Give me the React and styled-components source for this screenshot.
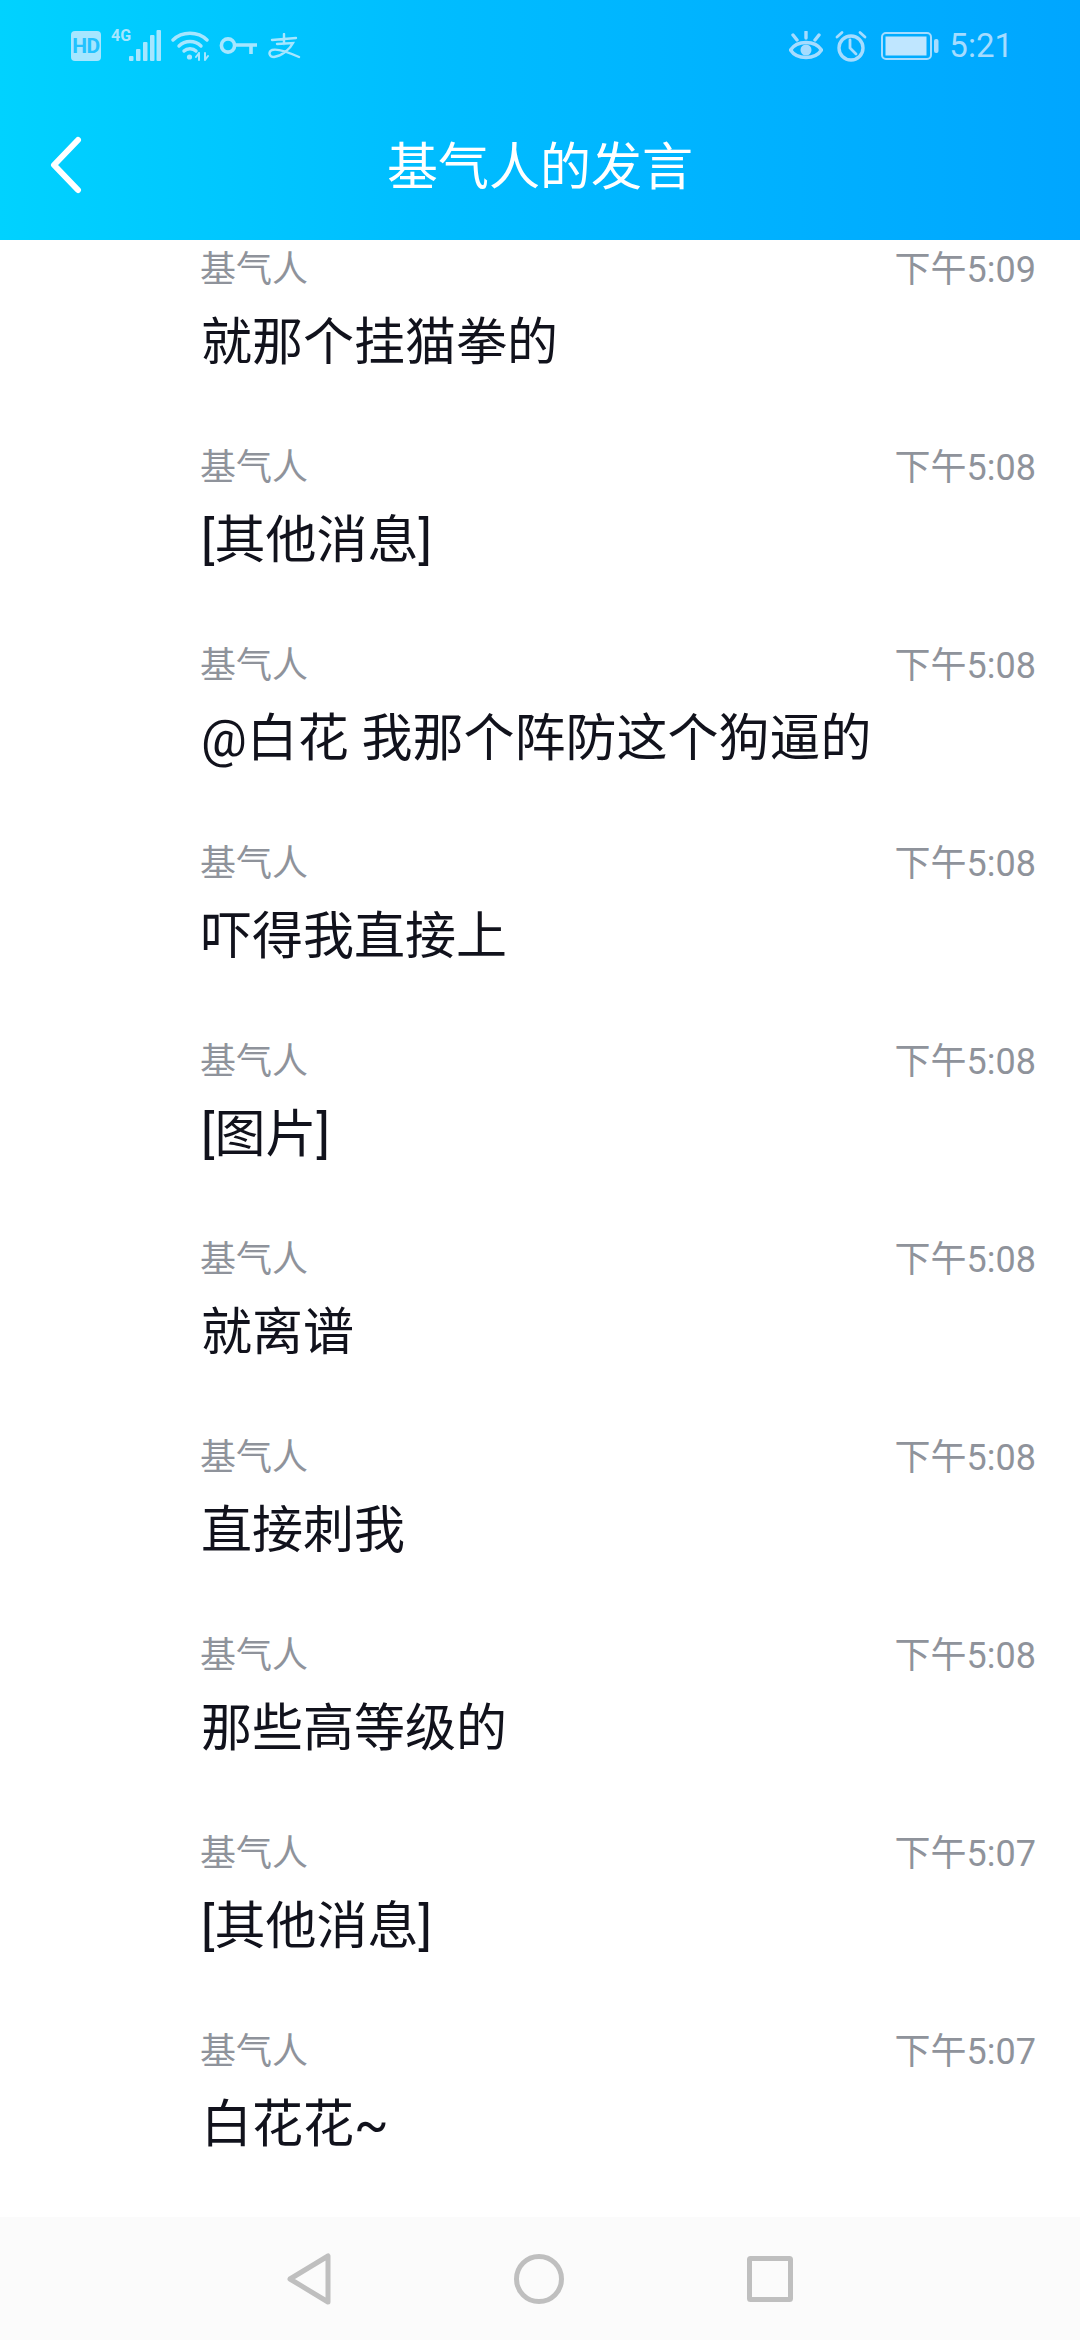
import React from 'react';
import styled, { createGlobalStyle } from 'styled-components';

const GlobalStyle = createGlobalStyle`
  html, body {
    margin: 0;
    padding: 0;
    background: #fff;
  }
  * {
    box-sizing: border-box;
  }
`;

const Page = styled.div`
  width: 1080px;
  height: 2340px;
  display: flex;
  flex-direction: column;
  overflow: hidden;
  background: #fff;
  font-family: Roboto, "Noto Sans CJK SC", sans-serif;
`;

const Header = styled.header`
  height: 240px;
  flex-shrink: 0;
  background: linear-gradient(90deg, #00d2ff 0%, #00bdff 40%, #00a6ff 100%);
  display: flex;
  flex-direction: column;
`;

const StatusBar = styled.div`
  height: 92px;
  padding: 0 67px 0 71px;
  display: flex;
  align-items: center;
  justify-content: space-between;
`;

const StatusGroup = styled.div`
  display: flex;
  align-items: center;
  gap: ${(p) => p.$gap || 10}px;
`;

const HdBadge = styled.span`
  width: 30px;
  height: 30px;
  border-radius: 4px;
  background: #a6e6ff;
  color: #22c2ff;
  font-size: 21px;
  font-weight: 700;
  letter-spacing: -0.5px;
  display: flex;
  align-items: center;
  justify-content: center;
`;

const SignalWrap = styled.div`
  width: 50px;
  height: 32px;
  display: flex;
  align-items: flex-end;
  justify-content: flex-end;
  position: relative;
`;

const NetLabel = styled.span`
  position: absolute;
  left: 0;
  top: -3px;
  font-size: 16px;
  line-height: 18px;
  font-weight: 700;
  color: #a6e6ff;
`;

const BatteryWrap = styled.span`
  display: flex;
  margin: 0 -2px 0 2px;
`;

const StatusTime = styled.span`
  font-size: 33px;
  line-height: 40px;
  color: #a5dcff;
`;

const NavRow = styled.div`
  flex: 1;
  display: grid;
  grid-template-columns: 150px 1fr 150px;
  align-items: center;
  padding-top: 4px;
`;

const BackButton = styled.div`
  padding-left: 50px;
  padding-bottom: 6px;
  display: flex;
  align-items: center;
`;

const Title = styled.h1`
  margin: 0;
  text-align: center;
  color: #fff;
  font-size: 51px;
  line-height: 64px;
  font-weight: 400;
`;

const List = styled.main`
  flex: 1;
  overflow: hidden;
  padding-top: 4px;
`;

const Row = styled.div`
  height: 198px;
  padding: 0 44px 0 200px;
`;

const RowTop = styled.div`
  display: flex;
  justify-content: space-between;
  align-items: center;
  height: 44px;
  color: #8f939b;
`;

const Name = styled.span`
  font-size: 36px;
  font-weight: 400;
`;

const Time = styled.span`
  font-size: 36px;
  color: #8f939b;
`;

const Message = styled.div`
  margin-top: 19px;
  padding-left: 1px;
  font-size: 51px;
  line-height: 72px;
  font-weight: 400;
  color: #11121c;
`;

const BottomNav = styled.nav`
  height: 123px;
  flex-shrink: 0;
  background: #fbfbfb;
  display: flex;
  align-items: center;
  justify-content: center;
  gap: 183px;
`;

const messages = [
  { text: '就那个挂猫拳的', time: '下午5:09' },
  { text: '[其他消息]', time: '下午5:08' },
  { text: '@白花 我那个阵防这个狗逼的', time: '下午5:08' },
  { text: '吓得我直接上', time: '下午5:08' },
  { text: '[图片]', time: '下午5:08' },
  { text: '就离谱', time: '下午5:08' },
  { text: '直接刺我', time: '下午5:08' },
  { text: '那些高等级的', time: '下午5:08' },
  { text: '[其他消息]', time: '下午5:07' },
  { text: '白花花~', time: '下午5:07' },
];

const tint = '#a6e6ff';
const tintRight = '#a5dcff';

const Signal = () => (
  <svg width="32" height="32" viewBox="0 0 32 32" fill={tint}>
    <rect x="0" y="26" width="4.500" height="5" rx="1" />
    <rect x="7" y="19" width="4.500" height="12" rx="1" />
    <rect x="14" y="12" width="4.500" height="19" rx="1" />
    <rect x="21" y="5" width="4.500" height="26" rx="1" />
    <rect x="27.500" y="0" width="4.500" height="31" rx="1" />
  </svg>
);

const Wifi = () => (
  <svg width="38" height="30" viewBox="0 0 38 30" fill="none" stroke={tint} strokeWidth="3.4" strokeLinecap="round">
    <path d="M2 9 C11 0 27 0 36 9" />
    <path d="M8 15 C14 9 24 9 30 15" />
    <path d="M13 20 C16 17 22 17 25 20" />
    <circle cx="18.5" cy="26" r="2.6" fill={tint} stroke="none" />
    <path d="M28 22 L28 29 M28 22 L25 26 M34 22 L34 29 M34 29 L37 25" strokeWidth="2" />
  </svg>
);

const KeyIcon = () => (
  <svg width="39" height="20" viewBox="0 0 39 20" fill="none" stroke={tint} strokeWidth="3.6">
    <circle cx="9" cy="9.5" r="6.6" />
    <path d="M16 9 L38 9 M32 9 L32 18" />
  </svg>
);

const AlipayIcon = () => (
  <svg width="33" height="26" viewBox="0 0 33 26" fill="none" stroke={tint} strokeWidth="2.4" strokeLinecap="round">
    <path d="M4 7 L28 5 M16 1 L16 11 M9 11 L25 10 C22 16 14 23 6 24 C1 24 0 19 4 17 C10 15 22 20 31 24" />
  </svg>
);

const Eye = () => (
  <svg width="34" height="30" viewBox="0 0 34 30" fill="none" stroke={tintRight} strokeWidth="3.4" strokeLinecap="round">
    <path d="M1.5 19 C8 9 26 9 32.500 19 C26 29 8 29 1.500 19 Z" />
    <circle cx="17" cy="19" r="5.500" fill={tintRight} stroke="none" />
    <path d="M17 1 L17 7 M4 4 L8 9 M30 4 L26 9" />
  </svg>
);

const Alarm = () => (
  <svg width="32" height="32" viewBox="0 0 32 32" fill="none" stroke={tintRight} strokeWidth="3.400" strokeLinecap="round">
    <circle cx="16" cy="18" r="12" />
    <path d="M15 10 L15 18 L21 24 M2 7 L7 2.500 M30 7 L25 2.500" strokeWidth="2.800" />
  </svg>
);

const Battery = () => (
  <svg width="58" height="28" viewBox="0 0 58 28" fill="none">
    <rect x="1" y="1" width="49" height="26" rx="4" stroke={tintRight} strokeWidth="2" />
    <rect x="4.500" y="4.500" width="41" height="19" fill="#bfe6ff" />
    <rect x="53" y="7" width="4.500" height="14" rx="2" fill={tintRight} />
  </svg>
);

const Chevron = () => (
  <svg width="32" height="58" viewBox="0 0 32 58" fill="none" stroke="#fff" strokeWidth="6" strokeLinecap="round" strokeLinejoin="round">
    <path d="M28 4 L4 29 L28 54" />
  </svg>
);

const NavBack = () => (
  <svg width="44" height="52" viewBox="0 0 44 52" fill="none" stroke="#bfbfbf" strokeWidth="5" strokeLinejoin="round">
    <path d="M41 3 L41 49 L3 26 Z" />
  </svg>
);

const NavHome = () => (
  <svg width="50" height="50" viewBox="0 0 50 50" fill="none" stroke="#bfbfbf" strokeWidth="5">
    <circle cx="25" cy="25" r="22.500" />
  </svg>
);

const NavSquare = () => (
  <svg width="46" height="46" viewBox="0 0 46 46" fill="none" stroke="#bfbfbf" strokeWidth="5" strokeLinejoin="round">
    <rect x="2.500" y="2.500" width="41" height="41" rx="1" />
  </svg>
);

const App = () => {
  return (
    <Page>
      <GlobalStyle />
      <Header>
        <StatusBar>
          <StatusGroup>
            <HdBadge>HD</HdBadge>
            <SignalWrap>
              <NetLabel>4G</NetLabel>
              <Signal />
            </SignalWrap>
            <Wifi />
            <KeyIcon />
            <AlipayIcon />
          </StatusGroup>
          <StatusGroup $gap={12}>
            <Eye />
            <Alarm />
            <BatteryWrap>
              <Battery />
            </BatteryWrap>
            <StatusTime>5:21</StatusTime>
          </StatusGroup>
        </StatusBar>
        <NavRow>
          <BackButton>
            <Chevron />
          </BackButton>
          <Title>基气人的发言</Title>
        </NavRow>
      </Header>
      <List>
        {messages.map((m, i) => (
          <Row key={i}>
            <RowTop>
              <Name>基气人</Name>
              <Time>{m.time}</Time>
            </RowTop>
            <Message>{m.text}</Message>
          </Row>
        ))}
      </List>
      <BottomNav>
        <NavBack />
        <NavHome />
        <NavSquare />
      </BottomNav>
    </Page>
  );
};

export default App;
